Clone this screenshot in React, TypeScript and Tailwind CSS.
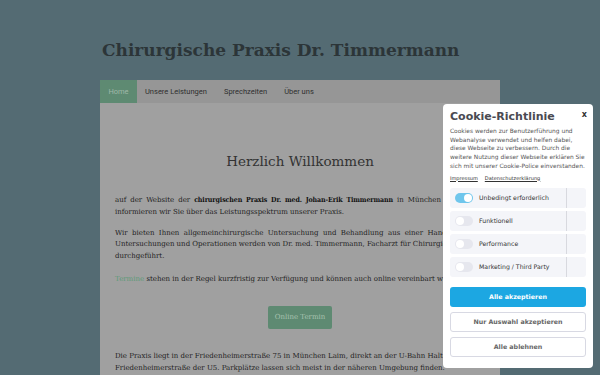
import React from "react";

const serif = { fontFamily: '"DejaVu Serif", "Liberation Serif", serif' };
const serifCond = { fontFamily: '"DejaVu Serif Condensed", "Liberation Serif", serif', fontStretch: "condensed" as const };
const sans = { fontFamily: 'Roboto, "Liberation Sans", sans-serif' };
const dv = { fontFamily: '"DejaVu Sans", Verdana, sans-serif' };

function Toggle({ on }: { on?: boolean }) {
  return (
    <div className={`relative h-[10px] w-[18px] rounded-full ${on ? "bg-[#6fc6ec]" : "bg-[#e6e7ee]"}`}>
      <div className={`absolute top-[1px] h-[8px] w-[8px] rounded-full bg-white ${on ? "left-[9px]" : "left-[1px]"}`} />
    </div>
  );
}

function Row({ label, on }: { label: string; on?: boolean }) {
  return (
    <div className="flex h-[20px] items-center rounded-[3px] bg-[#f4f5f9] pl-[5px]">
      <Toggle on={on} />
      <span className="ml-[6px] flex-1 text-[6.2px] text-[#333]">{label}</span>
      <div className="mr-[19px] h-full w-px bg-[#d8d9df]" />
    </div>
  );
}

function J({ children, w }: { children: React.ReactNode; w: string }) {
  return <div className={`${w} whitespace-nowrap text-justify [text-align-last:justify]`}>{children}</div>;
}

export default function App() {
  return (
    <div className="relative h-[375px] w-[600px] overflow-hidden bg-[#546b73]">
      <div className="ml-[100px] w-[400px]">
        <h1 className="pt-[38px] pl-[2px] text-[17px] font-bold leading-[24px] text-[#2c3538]" style={serif}>
          Chirurgische Praxis Dr. Timmermann
        </h1>
        <nav className="mt-[18px] flex h-[23px] items-center bg-[#969696] text-[7.5px] text-[#2f2f2f]" style={sans}>
          <div className="flex h-full w-[37px] items-center justify-center bg-[#5e8a72] text-[#9fb8a8]">Home</div>
          <div className="ml-[8px]">Unsere Leistungen</div>
          <div className="ml-[17px]">Sprechzeiten</div>
          <div className="ml-[17px]">Über uns</div>
        </nav>
        <main className="h-[280px] bg-[#a0a0a0] px-[15px] text-[7px] leading-[11.5px] text-[#222]" style={serif}>
          <h2 className="pt-[49px] text-center text-[13.5px] font-light leading-[18px] text-[#333]">Herzlich Willkommen</h2>
          <div className="mt-[24px]">
            <J w="w-[326px]">
              auf der Website der{" "}
              <b className="tracking-[-0.1px] text-[#111]" style={serifCond}>
                chirurgischen Praxis Dr. med. Johan-Erik Timmermann
              </b>{" "}
              in München
            </J>
            <div className="whitespace-nowrap">informieren wir Sie über das Leistungsspektrum unserer Praxis.</div>
          </div>
          <div className="mt-[9.5px]">
            <J w="w-[334px]">Wir bieten Ihnen allgemeinchirurgische Untersuchung und Behandlung aus einer Hand.</J>
            <J w="w-[333px]">Untersuchungen und Operationen werden von Dr. med. Timmermann, Facharzt für Chirurgie,</J>
            <div>durchgeführt.</div>
          </div>
          <div className="mt-[11.5px] whitespace-nowrap">
            <span className="text-[#5e9a78]">Termine</span> stehen in der Regel kurzfristig zur Verfügung und können auch online vereinbart werden.
          </div>
          <div className="mt-[21px] flex justify-center">
            <div className="flex h-[23px] w-[64px] items-center justify-center rounded-[2px] bg-[#5e8a72] text-[7px] text-[#a8c2b0]">Online Termin</div>
          </div>
          <div className="mt-[22px]">
            <J w="w-[348px]">Die Praxis liegt in der Friedenheimerstraße 75 in München Laim, direkt an der U-Bahn Haltestelle</J>
            <div className="whitespace-nowrap">Friedenheimerstraße der U5. Parkplätze lassen sich meist in der näheren Umgebung finden.</div>
          </div>
        </main>
      </div>

      <div className="absolute left-[443px] top-[104px] h-[264px] w-[150px] rounded-[4px] bg-white px-[7px] pt-[6px]" style={dv}>
        <div className="flex items-start justify-between">
          <div className="text-[11px] font-bold leading-[14px] text-[#4a4a52]">Cookie-Richtlinie</div>
          <div className="mt-[-1px] mr-[-1px] text-[8px] font-bold text-[#333]">x</div>
        </div>
        <div className="mt-[3px] whitespace-nowrap text-[5.9px] leading-[8.7px] text-[#555]">
          <div>Cookies werden zur Benutzerführung und</div>
          <div>Webanalyse verwendet und helfen dabei,</div>
          <div>diese Webseite zu verbessern. Durch die</div>
          <div>weitere Nutzung dieser Webseite erklären Sie</div>
          <div>sich mit unserer Cookie-Police einverstanden.</div>
        </div>
        <div className="mt-[4px] flex gap-[7px] text-[5px] leading-[7px] text-[#333] underline">
          <span>Impressum</span>
          <span>Datenschutzerklärung</span>
        </div>
        <div className="mt-[6px] flex flex-col gap-[3px]">
          <Row label="Unbedingt erforderlich" on />
          <Row label="Funktionell" />
          <Row label="Performance" />
          <Row label="Marketing / Third Party" />
        </div>
        <div className="mt-[10px] flex flex-col gap-[5px] text-[6.3px] font-bold">
          <div className="flex h-[20px] items-center justify-center rounded-[3px] bg-[#1ca7e2] text-white">Alle akzeptieren</div>
          <div className="flex h-[20px] items-center justify-center rounded-[3px] border border-[#d8d9e3] text-[#666]">Nur Auswahl akzeptieren</div>
          <div className="flex h-[20px] items-center justify-center rounded-[3px] border border-[#d8d9e3] text-[#666]">Alle ablehnen</div>
        </div>
      </div>
    </div>
  );
}
